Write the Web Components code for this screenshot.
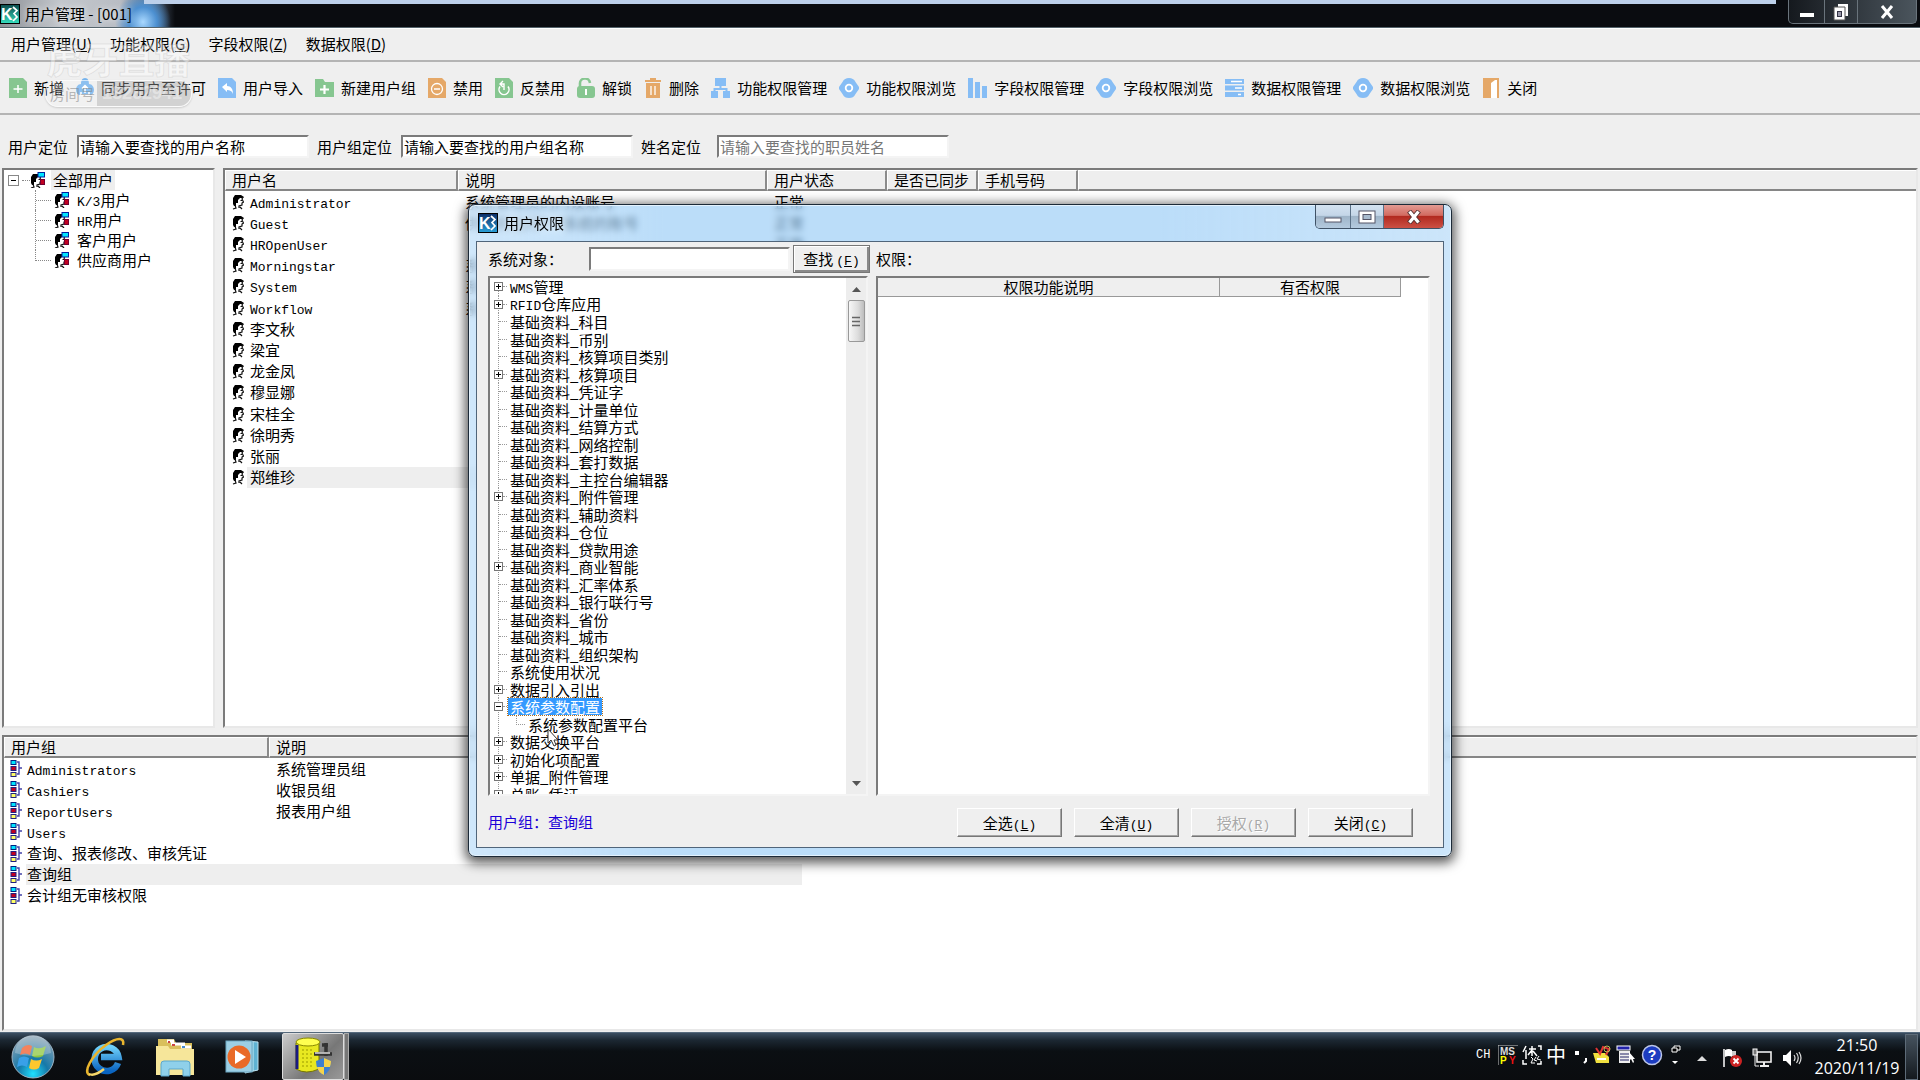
<!DOCTYPE html>
<html lang="zh-CN">
<head>
<meta charset="utf-8">
<title>用户管理</title>
<style>
html,body{margin:0;height:100%;overflow:hidden}
body{font:15px/20px "Noto Sans CJK SC","Liberation Sans",sans-serif;color:#000;background:#efefef}
</style>
</head>
<body>
<k3-desktop></k3-desktop>
<script>
const BASE = `*{box-sizing:border-box}button{font:inherit;color:inherit;padding:0;margin:0;border:0;background:none}
svg{display:block;flex:none}.m{font-family:"Liberation Mono",monospace;font-size:13px;line-height:1}
.sunken{background:#fff;border:2px solid;border-color:#7b7b7b #f4f4f4 #f4f4f4 #7b7b7b}`;

function define(name, css, html, setup) {
  customElements.define(name, class extends HTMLElement {
    connectedCallback() {
      if (this.shadowRoot) return;
      const root = this.attachShadow({mode: 'open'});
      root.innerHTML = `<style>${BASE}${css}</style>` + (typeof html === 'function' ? html(this) : html);
      if (setup) setup(root, this);
    }
  });
}

const latin = s => s.replace(/[A-Za-z0-9\/]+/g, '<span class="m">$&</span>');

const svg = (w, h, body, box) => `<svg width="${w}" height="${h}" viewBox="${box || `0 0 ${w} ${h}`}" aria-hidden="true">${body}</svg>`;
const G = '#86c690', B = '#86bdf5', O = '#e5a868';
const eye = svg(20, 20, `<path d="M10 0C13 0 15 1 16.500 4L20 9Q20.500 10 20 11L16.500 16C15 19 13 20 10 20S5 19 3.500 16L0 11Q-.500 10 0 9L3.500 4C5 1 7 0 10 0z" fill="${B}"/><circle cx="10" cy="10" r="3.300" fill="none" stroke="#fff" stroke-width="1.800"/>`);
const page = (c, inner) => svg(18, 20, `<path d="M0 0h14l4 4v16H0z" fill="${c}"/>${inner}`);
const ICONS = {
  add: page(G, '<path d="M9 7v8M4.500 11h9" stroke="#fff" stroke-width="1.500"/>'),
  sync: svg(18, 20, `<path d="M9 0c3 0 4 3 4 6 3 0 5 3 5 6s-2 5-4 5H4c-2 0-4-2-4-5s2-6 5-6c0-3 1-6 4-6z" fill="#78b5ee"/><path d="M9 15V8M6 10.500l3-3 3 3M5 14v3h8v-3" fill="none" stroke="#fff" stroke-width="1.500"/>`),
  import: page(B, '<path d="M4 9l5-4v3c4 0 6 3 6 8-1-3-3-4-6-4v2z" fill="#fff"/>'),
  group: svg(19, 18, `<path d="M0 0h8l2 3h9v15H0z" fill="${G}"/><path d="M9.500 6v9M5 10.500h9" stroke="#fff" stroke-width="2.200"/>`),
  ban: page(O, '<circle cx="9" cy="11" r="5.500" fill="none" stroke="#fff" stroke-width="1.300"/><path d="M6 11h6" stroke="#fff" stroke-width="1.500"/>'),
  unban: page(G, '<path d="M5 8.500a5 5 0 1 0 8 0" fill="none" stroke="#fff" stroke-width="1.500"/><path d="M8 3L5 6l3 3M5 6h4v6" fill="none" stroke="#fff" stroke-width="1.400"/>'),
  unlock: svg(18, 20, `<path d="M3 9V6a5 5 0 0 1 10-1" fill="none" stroke="${G}" stroke-width="2.600"/><rect y="8" width="18" height="12" rx="3" fill="${G}"/><path d="M9 11v6" stroke="#fff" stroke-width="2"/>`),
  trash: svg(18, 20, `<path d="M1 2h5V0h6v2h5v2H1zM2 5h14v15H2z" fill="${O}"/><path d="M7 8v9M11 8v9" stroke="#fff" stroke-width="1.300"/>`),
  org: svg(19, 20, `<path d="M4 0h11v8H4zM0 13h7v7H0zM12 13h7v7h-7z" fill="${B}"/><path d="M9.500 7v4M3.500 14v-3h12v3" fill="none" stroke="${B}" stroke-width="2"/>`),
  eye,
  bars: svg(19, 20, `<path d="M0 0h5v20H0zM7 4h5v16H7zM14 8h5v12h-5z" fill="${B}"/>`),
  server: svg(19, 18, `<path d="M0 0h19v5H0zM0 6.500h19v5H0zM0 13h19v5H0z" fill="${B}"/><path d="M6 2.500h11M10 9h7M13 15.500h3" stroke="#fff" stroke-width="1.600"/>`),
  door: svg(18, 20, `<path d="M1 0h16v20H1z" fill="${O}"/><path d="M9 20V5l4-3h2v18z" fill="#fff"/>`)
};
const k3 = (dark, light) => svg(20, 20, `<defs><linearGradient id="k" x2="0" y2="1"><stop stop-color="${dark}"/><stop offset="1" stop-color="${light}"/></linearGradient></defs><rect x=".500" y=".500" width="19" height="19" fill="url(#k)" stroke="#000"/><text x="1" y="16" font-family="Liberation Sans" font-weight="700" font-size="16" fill="#fff">K</text><path d="M13 3l4 3.500-3 3 3 3.500-4 4" fill="none" stroke="#fff" stroke-width="1.700"/>`);
const head = `<path d="M1 10V4l2-3h6l3 2-1 1H8L6 6v3H4v3H2z" fill="#000"/><path d="M11 3l-1 2 1.500 3-1.500 1v2L7 12v2M3 11l1 3-3 1M8.500 6.500h1.500M8 13l2 2" fill="none" stroke="#111" stroke-width="1.200"/>`;
const userIcon = svg(12, 16, head);
const usersIcon = svg(15, 16, `<g transform="translate(0 1)">${head}</g><rect x="8" y=".500" width="6.500" height="4.500" fill="#00e5ff" stroke="#0020a0"/><rect x="10.500" y="7.500" width="4" height="5" fill="#c00020" stroke="#700030"/>`);
const groupIcon = svg(12, 17, `<path d="M7 2h2v12H7M9 8h3" fill="none" stroke="#4343a8" stroke-width="1.400"/><rect x="1" y=".500" width="5" height="4" fill="#00e5ff" stroke="#002080"/><rect x="1" y="6.500" width="5" height="4" fill="#c00020" stroke="#202080"/><rect x="1" y="12.500" width="5" height="4" fill="#ff6" stroke="#202080"/>`);
const box = plus => svg(9, 9, `<rect x=".500" y=".500" width="8" height="8" fill="#fff" stroke="#777"/><path d="M2 4.500h5${plus ? 'M4.500 2v5' : ''}" stroke="#000"/>`);

/* main window caption */
define('title-bar', `:host{display:flex;height:28px;flex:none;position:relative;align-items:flex-start;
 background:radial-gradient(ellipse 28px 30px at 143px 22px,#a9d8ff,#4c8fd0 50%,transparent),linear-gradient(90deg,#8d9096 0,#c3c7cc 60px,#b9bdc4 120px,#5b6b80 150px,#0a0c10 175px);border-bottom:1px solid #54636b;color:#000}
.strip{position:absolute;left:144px;right:144px;top:0;height:4px;background:#bdd0ea}
.logo{padding-top:4px}h1{font-size:15px;font-weight:400;line-height:20px;margin:0;padding:4px 0 0 5px;flex:1;text-shadow:0 0 6px #fff}
.btns{display:flex;height:24px;margin-right:3px;border:1px solid #6a747c;border-top:0;border-radius:0 0 5px 5px;background:linear-gradient(90deg,#15191e,#4b555d)}
.btns button{display:grid;place-items:center;border-left:1px solid #6a747c}.btns button:first-child{border:0}`,
`<div class="strip"></div><div class="logo">${k3('#0b4a4c', '#35e0c0')}</div><h1>用户管理 - [001]</h1>
<div class="btns"><button aria-label="最小化" style="width:35px">${svg(16, 16, '<rect x="1" y="9" width="14" height="4" fill="#fff"/>')}</button><button aria-label="还原" style="width:33px">${svg(16, 18, '<path d="M5 1h10v12h-3V4H5z" fill="#fff"/><path d="M1 4h11v13H1z" fill="#fff" stroke="#555"/><rect x="4.500" y="8.500" width="4" height="5" fill="#99a" stroke="#334"/>')}</button><button aria-label="关闭" style="width:59px">${svg(14, 14, '<path d="M2 1l10 12M12 1L2 13" stroke="#fff" stroke-width="3"/>')}</button></div>`);

define('menu-bar', `:host{display:flex;height:34px;flex:none;align-items:center;gap:18px;padding:0 0 1px 11px;border-bottom:2px solid #b4b4b4;border-top:1px solid #fff}`,
[['用户管理', 'U'], ['功能权限', 'G'], ['字段权限', 'Z'], ['数据权限', 'D']].map(([t, k]) => `<button>${t}(<u>${k}</u>)</button>`).join(''));

define('tool-item', `:host{display:block}button{display:flex;align-items:center;gap:7px;white-space:nowrap}button svg{margin-right:0}`,
el => `<button>${ICONS[el.getAttribute('icon')]}<span><slot></slot></span></button>`);

define('tool-bar', `:host{display:flex;height:53px;flex:none;align-items:center;gap:12px;padding-left:9px;border-bottom:2px solid #b4b4b4}`,
[['add', '新增'], ['sync', '同步用户至许可'], ['import', '用户导入'], ['group', '新建用户组'], ['ban', '禁用'], ['unban', '反禁用'], ['unlock', '解锁'], ['trash', '删除'], ['org', '功能权限管理'], ['eye', '功能权限浏览'], ['bars', '字段权限管理'], ['eye', '字段权限浏览'], ['server', '数据权限管理'], ['eye', '数据权限浏览'], ['door', '关闭']]
.map(([i, t]) => `<tool-item icon="${i}">${t}</tool-item>`).join(''));

define('search-bar', `:host{display:flex;height:53px;flex:none;align-items:center;gap:8px;padding:10px 0 0 8px}
input{width:232px;height:23px;font:inherit;padding:0 1px;color:#000;border-radius:0;outline:0}input::placeholder{color:#777}label{white-space:nowrap}
.f{display:flex;align-items:center;gap:9px}.wide{gap:16px}`,
`<div class="f"><label for="a">用户定位</label><input id="a" class="sunken" value="请输入要查找的用户名称"></div>
<div class="f"><label for="b">用户组定位</label><input id="b" class="sunken" value="请输入要查找的用户组名称"></div>
<div class="f wide"><label for="c">姓名定位</label><input id="c" class="sunken" placeholder="请输入要查找的职员姓名"></div>`);

define('user-tree', `:host{display:block}ul{list-style:none;margin:0;padding:0}li>div{display:flex;align-items:center;height:20px}
.root{padding-left:4px}.root>div>svg:first-child{margin-right:3px}.dash{width:8px;border-top:1px dotted #888}
.root>div span:last-child{background:#eee;margin-left:6px;padding:0 2px}
ul ul{margin-left:27px}ul ul li{border-left:1px dotted #888}ul ul li:last-child{border-color:transparent}
ul ul li:last-child>div::before{content:"";align-self:flex-start;height:11px;border-left:1px dotted #888;margin-left:-1px}
ul ul .dash{width:15px;margin-right:3px}ul ul b{font-weight:400;margin-left:8px}`,
`<ul><li class="root"><div>${svg(11, 11, '<rect x=".500" y=".500" width="10" height="10" fill="#fff" stroke="#888"/><path d="M3 5.500h5" stroke="#000"/>')}<i class="dash"></i>${usersIcon}<span>全部用户</span></div>
<ul>${['K/3用户', 'HR用户', '客户用户', '供应商用户'].map(t => `<li><div><i class="dash"></i>${usersIcon}<b>${latin(t)}</b></div></li>`).join('')}</ul></li></ul>`);

/* list with fixed columns; the last column takes the space that is left */
const LISTS = {
  users: {icon: userIcon, height: 318, cols: [233, 309, 120, 91, 100], heads: ['用户名', '说明', '用户状态', '是否已同步', '手机号码'],
    rows: [['Administrator', '系统管理员的内设账号', '正常'], ['Guest', '供来宾访问K/3系统的账号', '正常'], ['HROpenUser', '', '正常'], ['Morningstar', '系统', ''], ['System', '系统', ''], ['Workflow', '系统', ''], ['李文秋'], ['梁宜'], ['龙金凤'], ['穆显娜'], ['宋桂全'], ['徐明秀'], ['张丽'], ['郑维珍']], selected: 13},
  groups: {icon: groupIcon, height: 169, cols: [265, 533], heads: ['用户组', '说明'],
    rows: [['Administrators', '系统管理员组'], ['Cashiers', '收银员组'], ['ReportUsers', '报表用户组'], ['Users'], ['查询、报表修改、审核凭证'], ['查询组'], ['会计组无审核权限']], selected: 5}
};
define('data-list', `:host{display:block;overflow:hidden;--pad:7px;--gap:6px}
table{border-collapse:separate;border-spacing:0;table-layout:fixed;width:100%}
th{height:20px;font-weight:400;text-align:left;background:#eee;padding:0 0 0 6px;line-height:18px;border-bottom:2px solid #868686;border-top:1px solid #fff;border-right:2px solid #8b8b8b;border-left:1px solid #fff;white-space:nowrap}
th:last-child{border-right:0}
td{padding:0 0 0 7px;line-height:20px;white-space:nowrap;vertical-align:middle}
td div{display:flex;align-items:center;height:20px}
td:first-child{padding-left:var(--pad)}td:first-child div{gap:var(--gap)}
.sel td:not(:last-child){background:#eee}.sel td:first-child{background:linear-gradient(90deg,#fff 22px,#eee 22px)}`,
el => {
  const d = LISTS[el.getAttribute('source')], n = d.cols.length + 1;
  return `<table style="height:${d.height}px"><colgroup>${d.cols.map(w => `<col style="width:${w}px">`).join('')}<col></colgroup>
<thead><tr>${d.heads.map(h => `<th>${h}</th>`).join('')}<th></th></tr></thead>
<tbody>${d.rows.map((r, i) => `<tr${i === d.selected ? ' class="sel"' : ''}><td><div>${d.icon}<span>${latin(r[0])}</span></div></td>${Array.from({length: n - 1}, (_, k) => `<td><div>${latin(r[k + 1] || '')}</div></td>`).join('')}</tr>`).join('')}</tbody></table>`;
});

/* permission object tree: + collapsed, - expanded, > child */
const NODES = ['+WMS管理', '+RFID仓库应用', ' 基础资料_科目', ' 基础资料_币别', ' 基础资料_核算项目类别', '+基础资料_核算项目', ' 基础资料_凭证字', ' 基础资料_计量单位', ' 基础资料_结算方式', ' 基础资料_网络控制', ' 基础资料_套打数据', ' 基础资料_主控台编辑器', '+基础资料_附件管理', ' 基础资料_辅助资料', ' 基础资料_仓位', ' 基础资料_贷款用途', '+基础资料_商业智能', ' 基础资料_汇率体系', ' 基础资料_银行联行号', ' 基础资料_省份', ' 基础资料_城市', ' 基础资料_组织架构', ' 系统使用状况', '+数据引入引出', '-系统参数配置', '>系统参数配置平台', '+数据交换平台', '+初始化项配置', '+单据_附件管理', '+总账_凭证'];
define('object-tree', `:host{display:flex;overflow:hidden}
ul{list-style:none;margin:0;padding:0 0 0 4px;flex:1;height:525px;display:grid;grid-auto-rows:1fr}
li{display:flex;align-items:center;line-height:17px;min-height:0;white-space:nowrap}
.n{width:14px;align-self:stretch;display:flex;align-items:center;background:repeating-linear-gradient(#999 0 1px,#fff 1px 2px) 4px 0/1px 100% no-repeat;flex:none}
.n.leaf::after{content:"";margin-left:5px;width:8px;border-top:1px dotted #999}.n svg+i{width:4px;border-top:1px dotted #999}
.s{width:9px;height:9px;align-self:flex-start;margin:0 1px 0 8px;border-left:1px dotted #999;border-bottom:1px dotted #999}
.t{padding:0 2px}
.on{background:#3399ff;color:#fff;outline:1px dotted #b07020}
li:first-child .n{background-position:4px 9px}
.bar{width:20px;background:#ededed;display:flex;flex-direction:column;align-items:center;padding:9px 1px 8px;gap:8px}
.bar button{width:17px;height:42px;border:1px solid #999;border-radius:2px;background:linear-gradient(90deg,#f7f7f7,#dcdcdc 60%,#bdbdbd);display:grid;place-items:center}.bar i{flex:1}`,
`<ul>${NODES.map(s => {
  const k = s[0], t = latin(s.slice(1));
  if (k === '>') return `<li><i class="n"></i><i class="s"></i><span class="t">${t}</span></li>`;
  return `<li><i class="n${k === ' ' ? ' leaf' : ''}">${k === ' ' ? '' : box(k === '+') + '<i></i>'}</i><span class="t${k === '-' ? ' on' : ''}">${t}</span></li>`;
}).join('')}</ul><div class="bar">${svg(9, 5, '<path d="M0 5l4.500-5L9 5z" fill="#555"/>')}<button aria-label="滚动">${svg(8, 11, '<path d="M0 1.500h8M0 5.500h8M0 9.500h8" stroke="#666" stroke-width="1.500"/>')}</button><i></i>${svg(9, 5, '<path d="M0 0h9L4.500 5z" fill="#555"/>')}</div>`);

define('permission-dialog', `:host{display:flex;flex-direction:column;position:absolute;left:468px;top:204px;width:984px;height:653px;border:1px solid #1c2a38;border-radius:7px;padding:0 7px 8px;
 background:linear-gradient(90deg,rgba(255,255,255,.3),transparent 20%,transparent 70%,rgba(255,255,255,.25)),rgba(142,198,245,.6);backdrop-filter:blur(3px);box-shadow:inset 0 0 0 1px #e4f2fd,0 3px 12px 3px rgba(0,0,0,.65)}
header{display:flex;height:36px;align-items:flex-start}header>svg{margin:8px 6px 0 2px}h2{flex:1;font-size:15px;font-weight:400;margin:0;padding-top:8px;line-height:20px;text-shadow:0 0 8px #fff}
.btns{display:flex;height:24px;border:1px solid #3f5266;border-top:0;border-radius:0 0 5px 5px;overflow:hidden}
.btns button{display:grid;place-items:center;background:linear-gradient(#d4e3f1 0,#c4d6e8 45%,#9fb5c9 50%,#b4cade);border-right:1px solid #5b7187}
.btns .x{background:linear-gradient(#e39b93 0,#d26a60 45%,#b22a20 50%,#cc5044);border:0}
.client{flex:1;background:#efefef;border:1px solid #50657a;display:flex;flex-direction:column;padding:2px 13px 10px 11px;min-height:0}
.find{display:flex;align-items:center;height:32px;padding-bottom:2px;gap:3px}.find label{width:98px}.find input{width:201px;height:24px;font:inherit;outline:0;border-radius:0}
.w{border:1px solid;border-color:#fff #777 #777 #fff;box-shadow:inset -1px -1px #a5a5a5}.find .w{width:77px;height:28px;border-color:#777;box-shadow:inset 1px 1px #fff,inset -2px -2px #8a8a8a}
.find span:last-child{margin-left:3px}
.panes{display:flex;gap:8px;flex:1;min-height:0}object-tree{width:380px}.grid{flex:1}
table{border-collapse:separate;border-spacing:0;table-layout:fixed}th{height:19px;font-weight:400;line-height:18px;padding:0;background:#efefef;border-right:1px solid #999;border-bottom:1px solid #999}
footer{display:flex;align-items:center;height:41px;gap:12px;padding:12px 17px 0 0}footer p{margin:0;flex:1;color:#1a00d8;padding-bottom:2px}
footer button{width:105px;height:29px}footer button:disabled{color:#a8a8a8;text-shadow:1px 1px #fff}
.cur{position:absolute;left:78px;top:523px}`,
`<header>${k3('#0c2c66', '#2aa0d8')}<h2>用户权限</h2><div class="btns"><button aria-label="最小化" style="width:35px">${svg(18, 16, '<rect x="1" y="9" width="16" height="4" fill="#fff" stroke="#556"/>')}</button><button aria-label="最大化" style="width:33px">${svg(18, 14, '<rect x="1" y="1" width="16" height="12" fill="#fff" stroke="#556"/><rect x="5" y="4.500" width="8" height="5" fill="#a9bccf" stroke="#556"/>')}</button><button class="x" aria-label="关闭" style="width:59px">${svg(16, 14, '<path d="M3 1l10 12M13 1L3 13" stroke="#533" stroke-width="5"/><path d="M3.500 1.500l9 11M12.500 1.500l-9 11" stroke="#fff" stroke-width="3.200"/>')}</button></div></header>
<div class="client"><div class="find"><label for="o">系统对象：</label><input id="o" class="sunken"><button class="w">查找<span class="m">(<u>F</u>)</span></button><span>权限：</span></div>
<div class="panes"><object-tree class="sunken"></object-tree><div class="grid sunken"><table><colgroup><col style="width:342px"><col style="width:181px"></colgroup><tr><th>权限功能说明</th><th>有否权限</th></tr></table></div></div>
<footer><p>用户组：查询组</p><button class="w">全选<span class="m">(<u>L</u>)</span></button><button class="w">全清<span class="m">(<u>U</u>)</span></button><button class="w" disabled>授权<span class="m">(<u>R</u>)</span></button><button class="w">关闭<span class="m">(<u>C</u>)</span></button></footer></div>
<div class="cur">${svg(12, 19, '<path d="M1 1v14l3-3 3 6 2-1-2-5h4z" fill="#fff" stroke="#333"/>')}</div>`);

define('live-mark', `:host{position:absolute;left:45px;top:38px;display:flex;flex-direction:column;align-items:center;pointer-events:none;color:rgba(255,255,255,.4)}
b{font-size:36px;line-height:40px;-webkit-text-stroke:1px rgba(150,150,150,.2)}
div{display:flex;width:147px;height:27px;margin-top:2px;border-radius:13px;border:1px solid rgba(255,255,255,.6);background:rgba(255,255,255,.15);box-shadow:0 1px 2px rgba(0,0,0,.15);line-height:25px;justify-content:space-between;padding-left:4px}
i{font-style:normal;font-size:15px;white-space:nowrap;color:rgba(130,130,130,.55)}span{background:rgba(140,140,140,.3);padding:0 9px 0 5px;border-radius:0 12px 12px 0;font:700 18px/25px "Liberation Sans"}`,
`<b>虎牙直播</b><div><i>房间号</i><span>18262941</span></div>`);

define('task-bar', `:host{display:flex;height:48px;flex:none;align-items:center;color:#fff;background:linear-gradient(#3a4d60 0,#1c2833 7px,#0b0f13 18px,#0a0c0f);border-top:1px solid #55697c;padding-left:10px}
button{display:grid;place-items:center;height:47px}.orb{width:46px}.ie{width:94px;padding-left:3px}.fo{width:50px;}.wm{width:84px}
.app{width:62px;border:1px solid #ddd;border-radius:2px;background:linear-gradient(135deg,#ccc,#777 60%,#999);margin-left:-2px}.app2{width:5px;background:#777;border:1px solid #aaa;height:47px}
.tray{margin-left:auto;display:flex;align-items:center;height:100%}.lang{display:flex;align-items:center;gap:4px;padding-bottom:4px}
.ch{font:12px/16px "Liberation Mono";width:18px}.zh{font-size:20px;line-height:22px;width:22px}
.sys{display:flex;gap:10px;padding:2px 0 0 8px;align-items:center}
time{font:16px/23px "Open Sans","Noto Sans",sans-serif;text-align:center;width:88px;margin-left:11px}
.show{width:13px;height:46px;border:1px solid #5d6b78;background:linear-gradient(#46535f,#14191e);margin:0 2px 0 4px}`,
`<button class="orb" aria-label="开始">${svg(44, 44, '<defs><radialGradient id="o" cx=".5" cy=".9" r=".9"><stop stop-color="#1fe0ff"/><stop offset=".4" stop-color="#1678a8"/><stop offset="1" stop-color="#8ea4b4"/></radialGradient></defs><circle cx="22" cy="22" r="21" fill="url(#o)" stroke="#9bb3c4"/><path d="M11 13q5-5 10-2l-2 9q-5-3-10 0z" fill="#ef5a28"/><path d="M23 12q5 3 12-1l-3 10q-6 3-11 0z" fill="#8cc63f"/><path d="M8 23q5-3 10 0l-2 9q-5-3-10 0z" fill="#39a0e8"/><path d="M20 24q5 3 11 0l-3 9q-5 3-10 0z" fill="#fdc72e"/><path d="M4 18a18 18 0 0 1 36 0q-18 6-36 0z" fill="#fff" opacity=".25"/>')}</button>
<button class="ie" aria-label="Internet Explorer">${svg(42, 42, '<defs><linearGradient id="e" x2="0" y2="1"><stop stop-color="#6fd0fa"/><stop offset="1" stop-color="#0a64c0"/></linearGradient></defs><path d="M34 27a12 12 0 1 1 .5-6H17" fill="none" stroke="url(#e)" stroke-width="6.500"/><path d="M6 39C-2 37 8 19 22 9 33 1 41 1 39 9" fill="none" stroke="#e9b52e" stroke-width="2.600"/><path d="M5 38c4 2 10-1 15-5" fill="none" stroke="#f5d66a" stroke-width="2.500"/>')}</button>
<button class="fo" aria-label="资源管理器">${svg(40, 40, '<path d="M3 2h16l2 4h16v32H3z" fill="#d9bf5c"/><path d="M12 4h7M16 7h14M26 10h10" stroke="#fff" stroke-width="3"/><path d="M13 5h2M17 8h3" stroke="#c44" stroke-width="2"/><path d="M27 10h3" stroke="#48c" stroke-width="2"/><path d="M1 9h12l2 3h24v26H1z" fill="#f6e69a"/><path d="M6 39V27q0-3 3-3h23q3 0 3 3v12h-7v-7H14v7z" fill="#8fd0ea" stroke="#5aa7cc"/>')}</button>
<button class="wm" aria-label="媒体播放器">${svg(34, 34, '<path d="M20 1l13 1v28l-13 3z" fill="#5fb2d2" stroke="#bfe3f0"/><path d="M24 1v31M28 2v29" stroke="#c8ebf5"/><rect x="1" y="1" width="26" height="31" fill="#9dcfe4" stroke="#6ea9c4"/><circle cx="14" cy="17" r="11.500" fill="#e96a28"/><path d="M10 10l11 7-11 7z" fill="#fff"/>')}</button>
<button class="app" aria-label="K/3">${svg(40, 40, '<path d="M3 6v26q10 6 23 0V6z" fill="#e8e820" stroke="#777700"/><path d="M4 8v24" stroke="#1a1a80" stroke-width="3"/><ellipse cx="15" cy="5" rx="12" ry="4" fill="#ffff50" stroke="#888800"/><path d="M9 13h12M9 17h12M9 21h12M9 25h12M9 29h12" stroke="#9a9a00" stroke-dasharray="2 2"/><path d="M21 17h18M33 6v13M29 8h6" stroke="#333" stroke-width="3.500"/><path d="M22 16h15" stroke="#ddd" stroke-width="1.500"/><path d="M23 24l8-3 7 3q0 10-7 14-8-4-8-14z" fill="#3d7fd0"/><path d="M31 21l7 3q0 3-1 6h-6zM31 30v8q-6-3-7-8z" fill="#f5d34c"/>')}</button><div class="app2"></div>
<div class="tray"><div class="lang"><span class="ch">CH</span>
${svg(20, 20, '<path d="M0 20V0h20" fill="none" stroke="#ccc"/><g font-family="Liberation Sans" font-weight="700" font-size="10"><text x="2" y="10" fill="#ddd">MS</text><text x="2" y="19" fill="#ff0">P</text><text x="11" y="19" fill="#e11">Y</text></g>')}
${svg(20, 20, '<path d="M4 1L1 7M4 5v9M7 4h7M10 1v10M10 5L6 10M11 6l4 5M16 1h3v4M1 15v4h4M15 19h4v-3" fill="none" stroke="#fff" stroke-width="1.500"/><path d="M9 12l2 2-2 4h4M14 12l-2 3 3 1M17 11l-2 3 4 1" fill="none" stroke="#fff"/>')}
<span class="zh">中</span>${svg(16, 20, '<rect x="3" y="6" width="4" height="4" fill="#fff"/><path d="M14 13v3l-2 2" stroke="#fff" fill="none" stroke-width="2"/>')}
${svg(20, 20, '<path d="M1 8h12l4 4v6H4z" fill="#f0e040"/><path d="M4 3l4 6 3-7 6 2-3 6" fill="none" stroke="#d33" stroke-width="2"/><circle cx="15" cy="4" r="3" fill="none" stroke="#bb5"/><path d="M5 14h9" stroke="#fff" stroke-width="2"/>')}
${svg(20, 20, '<rect x="1" y="1" width="13" height="4" fill="#22a" stroke="#fff"/><rect x="3" y="6" width="11" height="12" fill="#eee"/><path d="M4 9h9M4 12h9M4 15h9" stroke="#226"/><path d="M13 7v9l2-2 2 4 1-1-1-3h2z" fill="#fff"/>')}
${svg(24, 22, '<circle cx="12" cy="11" r="9.500" fill="#1c3cc0" stroke="#bcc6e8" stroke-width="1.500"/><text x="12" y="16" text-anchor="middle" font-family="Liberation Sans" font-weight="700" font-size="14" fill="#fff">?</text>')}
${svg(16, 24, '<path d="M6 3h6v4H6z" fill="#000" stroke="#fff"/><path d="M4 5h5v4H4z" fill="#000" stroke="#fff"/><path d="M4 18h6l-3 3z" fill="#fff"/>')}</div>
<div class="sys">${svg(20, 12, '<path d="M5 9l5-5 5 5z" fill="#ddd"/>')}
${svg(20, 20, '<path d="M2 1v18" stroke="#fff" stroke-width="1.500"/><path d="M3 2q4-2 7 0v7q-3-2-7 0z" fill="#fff"/><path d="M10 3h4v5h-4z" fill="#ccc"/><circle cx="14" cy="13" r="6" fill="#c22"/><path d="M11.500 10.500l5 5M16.500 10.500l-5 5" stroke="#fff" stroke-width="1.800"/>')}
${svg(20, 20, '<rect x="5" y="4" width="14" height="10" fill="#111" stroke="#eee" stroke-width="1.600"/><path d="M8 18h9M12 14v4" stroke="#eee" stroke-width="2"/><rect x="1" y="1" width="4" height="6" fill="#777" stroke="#fff"/><path d="M3 7v11h4" fill="none" stroke="#eee"/>')}
${svg(20, 20, '<path d="M1 7h3l5-5v16l-5-5H1z" fill="#fff"/><path d="M12 7q2 3 0 6M14.500 5q3.500 5 0 10M17 4q4 6 0 12" fill="none" stroke="#ddd" stroke-width="1.200"/>')}</div>
<time>21:50<br>2020/11/19</time><div class="show"></div></div>`);

define('k3-desktop', `:host{display:flex;flex-direction:column;height:100vh;position:relative}
main{flex:1;display:flex;flex-direction:column;gap:7px;padding:0 2px 1px;min-height:0}.top{flex:560;display:flex;gap:8px;min-height:0}
user-tree{width:213px;flex:none}.top data-list{flex:1}.bottom{flex:292;min-height:0}
.sunken{border-color:#7b7b7b #e8e8e8 #e8e8e8 #7b7b7b}`,
`<title-bar></title-bar><menu-bar></menu-bar><tool-bar></tool-bar><search-bar></search-bar>
<main><div class="top"><user-tree class="sunken"></user-tree><data-list class="sunken" source="users"></data-list></div>
<data-list class="bottom sunken" style="--pad:6px;--gap:5px" source="groups"></data-list></main>
<task-bar></task-bar><permission-dialog role="dialog" aria-label="用户权限"></permission-dialog><live-mark></live-mark>`);
</script>
</body>
</html>
